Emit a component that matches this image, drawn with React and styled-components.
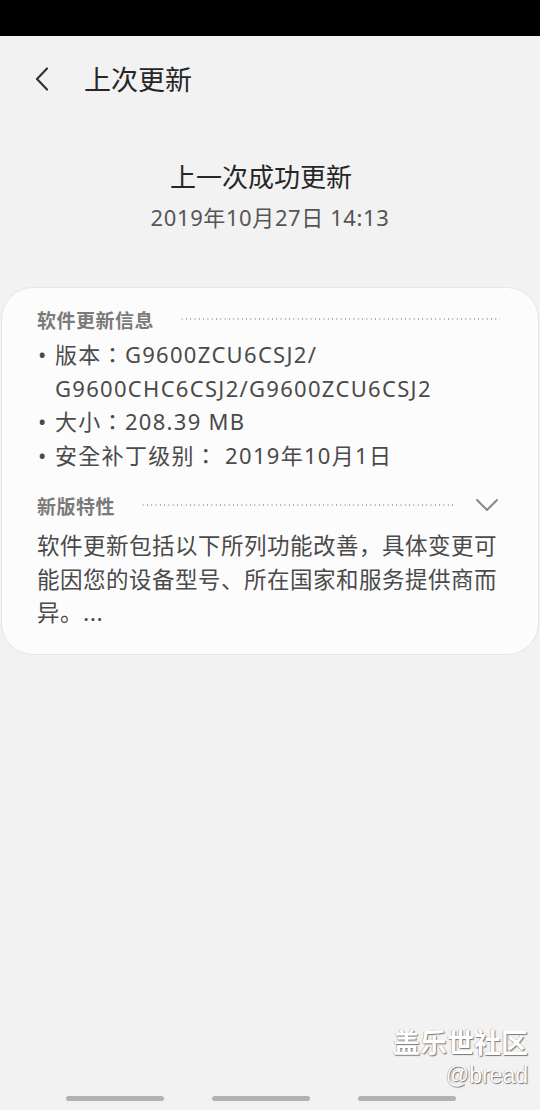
import React from "react";
import styled, { createGlobalStyle } from "styled-components";

const GlobalStyle = createGlobalStyle`
  html, body { margin: 0; padding: 0; background: #f2f2f2; }
  body { font-family: "Noto Sans", "Noto Sans CJK SC", sans-serif; }
  * { box-sizing: border-box; }
`;

const Screen = styled.div`
  width: 540px;
  height: 1110px;
  background: #f2f2f2;
  display: flex;
  flex-direction: column;
  position: relative;
  overflow: hidden;
`;

const StatusBar = styled.div`
  height: 36px;
  background: #000;
  flex-shrink: 0;
`;

const Header = styled.div`
  height: 86px;
  display: flex;
  align-items: center;
  padding: 0 0 0 30px;
  gap: 30px;
`;

const BackButton = styled.div`
  width: 24px;
  height: 28px;
  display: flex;
  align-items: center;
  justify-content: center;
`;

const Title = styled.div`
  font-size: 27px;
  color: #262626;
  font-family: "Noto Sans CJK SC", sans-serif;
  margin-top: -1px;
`;

const Summary = styled.div`
  display: flex;
  flex-direction: column;
  align-items: center;
  padding-top: 36px;
  height: 165px;
`;

const SummaryTitle = styled.div`
  font-size: 26px;
  color: #262626;
  font-family: "Noto Sans CJK SC", sans-serif;
  line-height: 36px;
  margin-right: 18px;
`;

const SummaryDate = styled.div`
  font-size: 22px;
  color: #555;
  line-height: 30px;
  margin-top: 8px;
  letter-spacing: 0.6px;
  font-family: "Noto Sans", "Noto Sans CJK SC", sans-serif;
`;

const Card = styled.div`
  margin: 0 1px;
  background: #fcfcfc;
  border: 1px solid #e6e6e6;
  border-radius: 32px;
  padding: 14px 36px 22px 35px;
  height: 368px;
`;

const SectionHead = styled.div`
  display: flex;
  align-items: center;
  height: 34px;
`;

const SectionLabel = styled.div`
  font-size: 19px;
  color: #7a7a7a;
  font-weight: 700;
  font-family: "Noto Sans CJK SC", sans-serif;
  white-space: nowrap;
  letter-spacing: 0.5px;
`;

const Dots = styled.div`
  flex: 1;
  height: 2px;
  margin-left: ${(p) => p.$ml}px;
  margin-right: ${(p) => p.$mr}px;
  background-image: radial-gradient(circle, #a8a8a8 0.8px, transparent 1px);
  background-size: 4.3px 2px;
  background-repeat: repeat-x;
`;

const Chevron = styled.div`
  width: 26px;
  height: 20px;
  display: flex;
  align-items: center;
  justify-content: center;
  margin-right: 2px;
`;

const List = styled.ul`
  list-style: none;
  margin: 2px 0 0 0;
  padding: 0;
`;

const Item = styled.li`
  display: flex;
  font-size: 22px;
  line-height: 33.5px;
  color: #4a4a4a;
  letter-spacing: 1.3px;
  font-family: "Noto Sans", "Noto Sans CJK TC", sans-serif;
`;

const Bullet = styled.span`
  width: 18px;
  flex-shrink: 0;
  padding-left: 1px;
  letter-spacing: 0;
`;

const ItemText = styled.span`
  flex: 1;
`;

const SubSection = styled(SectionHead)`
  margin-top: 16px;
`;

const Paragraph = styled.div`
  font-size: 22.5px;
  line-height: 33.5px;
  color: #4a4a4a;
  margin-top: 6px;
  font-family: "Noto Sans CJK SC", sans-serif;
  letter-spacing: 0.5px;
`;

const Watermark = styled.div`
  position: absolute;
  right: 12px;
  bottom: 20px;
  display: flex;
  flex-direction: column;
  align-items: flex-end;
  color: #fff;
  text-shadow: 1px 1px 1px #777, -0.5px -0.5px 0.5px #999;
`;

const WmTitle = styled.div`
  font-size: 27px;
  font-weight: 700;
  font-family: "Noto Sans CJK SC", sans-serif;
  line-height: 36px;
`;

const WmUser = styled.div`
  font-size: 23px;
  line-height: 30px;
  font-family: "Liberation Sans", sans-serif;
`;

const NavBar = styled.div`
  position: absolute;
  left: 66px;
  bottom: 9px;
  display: flex;
  gap: 48px;
`;

const NavPill = styled.div`
  width: 98px;
  height: 5px;
  border-radius: 3px;
  background: #b2b2b2;
`;

const items = [
  "版本：G9600ZCU6CSJ2/ G9600CHC6CSJ2/G9600ZCU6CSJ2",
  "大小：208.39 MB",
  "安全补丁级别： 2019年10月1日",
];

export default function App() {
  return (
    <Screen>
      <GlobalStyle />
      <StatusBar />
      <Header>
        <BackButton>
          <svg width="16" height="24" viewBox="0 0 16 24" fill="none">
            <path d="M13 1.5 L3 12 L13 22.5" stroke="#333" strokeWidth="2.2" strokeLinecap="round" strokeLinejoin="round" />
          </svg>
        </BackButton>
        <Title>上次更新</Title>
      </Header>
      <Summary>
        <SummaryTitle>上一次成功更新</SummaryTitle>
        <SummaryDate>2019年10月27日 14:13</SummaryDate>
      </Summary>
      <Card>
        <SectionHead>
          <SectionLabel>软件更新信息</SectionLabel>
          <Dots $ml={26} $mr={2} />
        </SectionHead>
        <List>
          {items.map((t) => (
            <Item key={t}>
              <Bullet>•</Bullet>
              <ItemText>{t}</ItemText>
            </Item>
          ))}
        </List>
        <SubSection>
          <SectionLabel>新版特性</SectionLabel>
          <Dots $ml={26} $mr={18} />
          <Chevron>
            <svg width="24" height="14" viewBox="0 0 24 14" fill="none">
              <path d="M2 2 L12 12 L22 2" stroke="#888" strokeWidth="2" strokeLinecap="round" strokeLinejoin="round" />
            </svg>
          </Chevron>
        </SubSection>
        <Paragraph>
          软件更新包括以下所列功能改善，具体变更可能因您的设备型号、所在国家和服务提供商而异。...
        </Paragraph>
      </Card>
      <Watermark>
        <WmTitle>盖乐世社区</WmTitle>
        <WmUser>@bread</WmUser>
      </Watermark>
      <NavBar>
        <NavPill />
        <NavPill />
        <NavPill />
      </NavBar>
    </Screen>
  );
}
